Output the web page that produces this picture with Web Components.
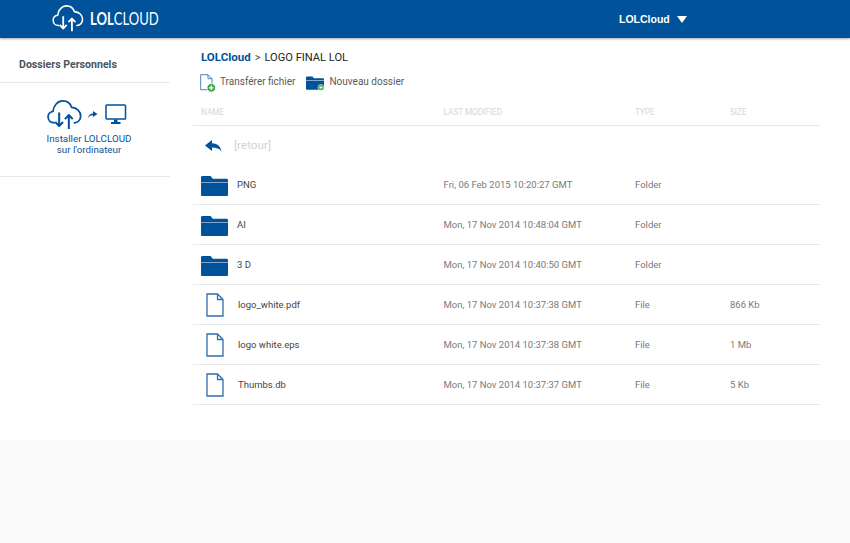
<!DOCTYPE html>
<html><head><meta charset="utf-8"><style>
html,body{margin:0;padding:0;background:#fafafa;height:543px;overflow:hidden;font-family:Roboto,"Liberation Sans",sans-serif}
</style></head><body>
<script>
const def=(n,html)=>customElements.define(n,class extends HTMLElement{connectedCallback(){if(this.shadowRoot)return;this.attachShadow({mode:'open'}).innerHTML=html(this);}});
const cloud=`<svg class="c" viewBox="0 0 36 31" fill="none" stroke="currentColor" stroke-linejoin="round"><path d="M7.500 23.500H7C3.500 23.500 1 20.800 1 17.400 1 14.300 3.300 12 6.200 11.700 6.600 5.800 11 1 16.300 1c4.300 0 7.700 2.700 9.100 6.600C30.700 7.900 34.700 11.800 34.700 16.500c0 3.900-2.700 6.800-6.500 7.100" stroke-width="1.800" stroke-linecap="round"/><path d="M12.500 13V26.500M8.500 22.800 12.500 27 16.500 22.800" stroke-width="2.100"/><path d="M22.500 30V16M18.500 19.800 22.500 15.500 26.500 19.800" stroke-width="2.100"/></svg>`;
const plus=(x,y)=>`<circle cx="${x}" cy="${y}" r="4.300" fill="#3fa34d" stroke="#fff" stroke-width=".8"/><path d="M${x-2.300} ${y}H${x+2.300}M${x} ${y-2.300}V${y+2.300}" stroke="#fff" stroke-width="1.300"/>`;
const folderPath='M0 3.500C0 2.500 .6 2 1.500 2H9.500L11.500 4.500H25C26 4.500 26.500 5 26.500 6V7.800H0ZM0 8.400H26.500V20C26.500 21 26 21.500 25 21.500H1.500C.6 21.500 0 21 0 20Z';
def('app-header',()=>`<style>
:host{display:flex;height:38px;background:#00529b;color:#fff;box-shadow:0 1px 2px rgba(0,0,0,.35);position:relative;align-items:center;padding:0 0 0 52px}
svg.c{width:32px;height:27px;margin-top:-1px;display:block;flex:none}
.logo{font:400 16.500px/1 Lato,"Liberation Sans",sans-serif;margin-left:6px;margin-top:1px;white-space:nowrap;transform:scaleX(.79);transform-origin:left center}
b{font-weight:700}
.user{position:absolute;left:619px;top:13px;font:700 10.500px/13px "Liberation Sans",sans-serif;display:flex;align-items:center;gap:7px}
.tri{width:0;height:0;border:5px solid transparent;border-top:7px solid #fff;border-bottom:0}
</style>${cloud}<span class="logo"><b>LOL</b>CLOUD</span><div class="user">LOLCloud <span class="tri"></span></div>`);
def('side-bar',()=>`<style>
:host{display:block;width:170px;flex:none}
.h{border-bottom:1px solid #e8e8e8;box-sizing:border-box;padding:20px 0 0 19px;font:700 10.600px/13px Roboto,"Liberation Sans",sans-serif;color:#4a5560;height:45px}
.inst{border-bottom:1px solid #e8e8e8;box-sizing:border-box;display:flex;flex-direction:column;align-items:center;padding:16px 0 0 8px;color:#00529b;height:94px}
.ic{display:flex;align-items:center;gap:5px;height:31px;margin-left:-5px}
.ic svg.c{width:35px;height:30px;display:block}
.t{font:400 9.800px/11px Roboto,"Liberation Sans",sans-serif;text-align:center;margin-top:3px;color:#12528f}
</style><div class="h">Dossiers Personnels</div><div class="inst"><div class="ic">${cloud}<svg width="11" height="9" viewBox="0 0 11 9"><path d="M1 8C1.500 5 3.500 3.500 6 3.500V1L10.500 4 6 7V5.300C4 5.300 2.500 6 1 8Z" fill="currentColor"/></svg><svg width="22" height="22" viewBox="0 0 22 22" style="margin-left:2px"><rect x="1" y="1" width="19.500" height="14" rx=".8" fill="none" stroke="currentColor" stroke-width="1.500"/><path d="M9 15.500H12.500V18H15.500V20H6V18H9Z" fill="currentColor"/></svg></div><div class="t">Installer LOLCLOUD<br>sur l'ordinateur</div></div>`);
def('bread-crumb',()=>`<style>
:host{display:block;height:17px;padding:4px 0 0 8px;font:400 11.100px/16px Roboto,"Liberation Sans",sans-serif;color:#222}
b{color:#00529b;font-weight:700;font-size:11.500px}
i{font-style:normal;margin:0 4px;color:#444}
</style><b>LOLCloud</b><i>&gt;</i>LOGO FINAL LOL`);
def('tool-bar',()=>`<style>
:host{display:flex;height:22px;padding:5px 0 0 7px;font:400 10px/16px Roboto,"Liberation Sans",sans-serif;color:#5a5a5a;align-items:center}
.b{display:flex;align-items:center}
svg{display:block;flex:none;overflow:visible}
</style><div class="b"><svg width="16" height="17" viewBox="0 0 16 17"><path d="M.7.7H8L12 4.700V15.700H.7ZM8 .7V4.700H12" fill="#fff" stroke="#4a86bd"/>${plus(11.300,13.800)}</svg><span style="margin-left:4px">Transférer fichier</span></div>
<div class="b" style="margin-left:11px"><svg width="18" height="15" viewBox="0 0 26.500 21.500"><path d="${folderPath}" fill="#00529b"/>${plus(22,18)}</svg><span style="margin-left:5px">Nouveau dossier</span></div>`);
def('file-head',()=>`<style>
:host{display:grid;grid-template-columns:250.500px 191.500px 95px 90px;height:32px;border-bottom:1px solid #e8e8e8;font:400 8.200px/38px Roboto,"Liberation Sans",sans-serif;color:#d6d6d6}
.f{padding-left:8px}
</style><span class="f">NAME</span><span>LAST MODIFIED</span><span>TYPE</span><span>SIZE</span>`);
def('file-row',(e)=>{const k=e.getAttribute('kind');
const ic=k==='folder'?`<svg width="27" height="22" viewBox="0 0 26.500 21.500"><path d="${folderPath}" fill="#00529b"/></svg>`:
`<svg width="18" height="24" viewBox="0 0 18 24" style="margin-left:5px"><path d="M1 1H11.500L17 6.500V23H1ZM11.500 1V6.500H17" fill="#fff" stroke="#2e6fae" stroke-width="1.300"/></svg>`;
return `<style>
:host{display:grid;grid-template-columns:250.500px 191.500px 95px 90px;height:39px;border-bottom:1px solid #e8e8e8;font:400 9.500px/39px Roboto,"Liberation Sans",sans-serif;color:#7a7a7a;align-items:center}
.n{display:flex;align-items:center;padding-left:8px;color:#444}
.n span{margin-left:${k==='folder'?'9px':'14px'}}
svg{display:block;flex:none}
</style><div class="n">${ic}<span><slot></slot></span></div><div>${e.getAttribute('date')}</div><div>${k==='folder'?'Folder':'File'}</div><div>${e.getAttribute('size')||''}</div>`});
def('back-row',()=>`<style>
:host{display:flex;height:39px;align-items:center;padding-left:12px;font:400 11.700px/39px Roboto,"Liberation Sans",sans-serif;color:#d3d3d3}
svg{display:block;margin-right:12px}
</style><svg width="17" height="12" viewBox="0 0 17 12"><path d="M0 5.500 7 0V3.300C12 3.300 15.500 6 16.500 11.500 14.500 8.500 11.500 7.500 7 7.500V11Z" fill="#00529b"/></svg>[retour]`);
def('app-page',()=>`<style>
:host{display:block;height:543px}
.m{display:flex;background:#fff;height:402px}
.c{margin-left:23px;width:627px;padding-top:7px;box-sizing:border-box}
</style><slot name="header"></slot><div class="m"><slot name="side"></slot><div class="c"><slot></slot></div></div>`);
</script>
<app-page>
<app-header slot="header"></app-header>
<side-bar slot="side"></side-bar>
<bread-crumb></bread-crumb>
<tool-bar></tool-bar>
<file-head></file-head>
<back-row></back-row>
<file-row kind="folder" date="Fri, 06 Feb 2015 10:20:27 GMT">PNG</file-row>
<file-row kind="folder" date="Mon, 17 Nov 2014 10:48:04 GMT">AI</file-row>
<file-row kind="folder" date="Mon, 17 Nov 2014 10:40:50 GMT">3 D</file-row>
<file-row kind="file" date="Mon, 17 Nov 2014 10:37:38 GMT" size="866 Kb">logo_white.pdf</file-row>
<file-row kind="file" date="Mon, 17 Nov 2014 10:37:38 GMT" size="1 Mb">logo white.eps</file-row>
<file-row kind="file" date="Mon, 17 Nov 2014 10:37:37 GMT" size="5 Kb">Thumbs.db</file-row>
</app-page>
</body></html>
